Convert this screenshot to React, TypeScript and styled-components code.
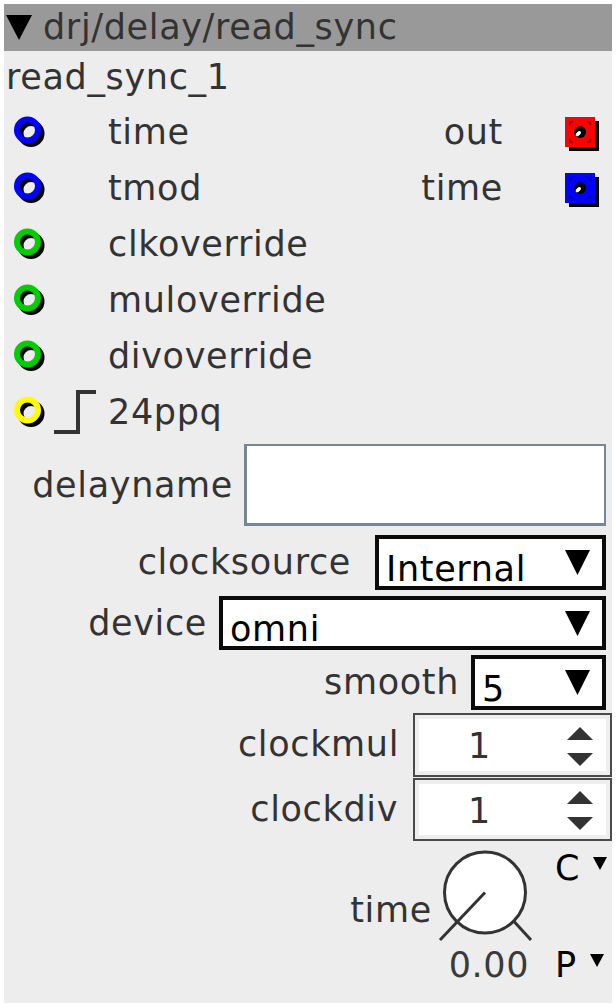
import React from "react";
import styled, { createGlobalStyle } from "styled-components";

const GlobalStyle = createGlobalStyle`
  html, body { margin: 0; padding: 0; background: #ffffff; }
  body { font-family: "DejaVu Sans", "Liberation Sans", sans-serif; }
`;

const Panel = styled.div`
  box-sizing: border-box;
  margin: 4px;
  width: 608px;
  height: 999px;
  background: #ededed;
  display: flex;
  flex-direction: column;
  font-size: 35px;
  line-height: 41px;
  letter-spacing: 0.65px;
  color: #333333;
  overflow: hidden;
`;

const TitleBar = styled.div`
  height: 47px;
  flex: none;
  background: #999999;
  display: flex;
  align-items: center;
  padding-left: 2px;
  white-space: nowrap;
`;

const TitleText = styled.span`
  color: #333333;
  margin-left: 11px;
`;

const InstanceName = styled.div`
  height: 53px;
  flex: none;
  display: flex;
  align-items: center;
  padding-left: 2px;
`;

const IOArea = styled.div`
  display: flex;
  justify-content: space-between;
  flex: none;
`;

const Column = styled.div`
  display: flex;
  flex-direction: column;
`;

const InletRow = styled.div`
  height: 56px;
  display: flex;
  align-items: center;
  padding-left: 6px;
`;

const StepSlot = styled.div`
  width: 58px;
  height: 56px;
  display: flex;
`;

const OutletRow = styled.div`
  height: 56px;
  display: flex;
  align-items: center;
  justify-content: flex-end;
  gap: 60px;
  padding-right: 9px;
`;

const Params = styled.div`
  display: flex;
  flex-direction: column;
`;

const ParamRow = styled.div<{ $h: number; $gap: number; $pr: number }>`
  height: ${(p) => p.$h}px;
  flex: none;
  display: flex;
  align-items: center;
  justify-content: flex-end;
  gap: ${(p) => p.$gap}px;
  padding-right: ${(p) => p.$pr}px;
`;

const Label = styled.span`
  color: #333333;
  white-space: nowrap;
`;

const TextField = styled.div`
  box-sizing: border-box;
  width: 362px;
  height: 82px;
  background: #ffffff;
  border: 3px solid #76879a;
  border-right-width: 2px;
  border-top-width: 2px;
`;

const Dropdown = styled.div<{ $w: number; $h: number }>`
  box-sizing: border-box;
  width: ${(p) => p.$w}px;
  height: ${(p) => p.$h}px;
  background: #ffffff;
  border: 4px solid #0a0a0a;
  display: flex;
  align-items: center;
  justify-content: space-between;
  padding-left: 7px;
  padding-right: 12px;
  color: #000000;
`;

const DropValue = styled.span`
  align-self: flex-end;
  line-height: 34px;
`;

const Spinner = styled.div<{ $h: number }>`
  box-sizing: border-box;
  width: 199px;
  height: ${(p) => p.$h}px;
  background: #ffffff;
  border: 2px solid #4a4a4a;
  box-shadow: inset 0 0 0 4px #eeeeee;
  display: flex;
  align-items: center;
`;

const SpinValue = styled.span`
  flex: 1;
  text-align: center;
  padding-top: 4px;
  padding-right: 6px;
  color: #333333;
`;

const SpinArrows = styled.div`
  width: 60px;
  display: flex;
  justify-content: center;
  margin-top: 4px;
`;

const KnobRow = styled.div`
  display: flex;
  justify-content: flex-end;
  align-items: flex-start;
  padding-top: 5px;
  padding-right: 5px;
`;

const KnobLabel = styled.span`
  color: #333333;
  margin-top: 44px;
  margin-right: 5px;
`;

const KnobColumn = styled.div`
  display: flex;
  flex-direction: column;
  align-items: center;
  width: 96px;
`;

const KnobValue = styled.span`
  margin-top: 3px;
  padding-left: 8px;
  color: #3a3a3a;
  white-space: nowrap;
`;

const ModColumn = styled.div`
  display: flex;
  flex-direction: column;
  gap: 56px;
  margin-top: 2px;
  margin-left: 22px;
`;

const ModItem = styled.div`
  display: flex;
  align-items: flex-start;
  gap: 13px;
  color: #000000;
`;

const SmallCaret = styled.svg`
  margin-top: 9px;
`;

const Ring = ({ color }: { color: string }) => (
  <svg width="40" height="40" viewBox="0 0 40 40">
    <circle cx="21" cy="21.5" r="10.5" fill="none" stroke="#000" strokeWidth="6" />
    <circle cx="17.5" cy="18" r="10.5" fill="none" stroke={color} strokeWidth="6" />
  </svg>
);

const Step = () => (
  <svg width="58" height="56" viewBox="0 0 58 56">
    <path d="M4 48 H28 V8 H46" fill="none" stroke="#333" strokeWidth="4" />
  </svg>
);

const Outlet = ({ color }: { color: string }) => (
  <svg width="40" height="40" viewBox="0 0 40 40">
    <rect x="6" y="9" width="30" height="30" fill="#000" />
    <rect x="2" y="5" width="30" height="30" fill={color} />
    <g stroke="#000" strokeOpacity="0.6" strokeWidth="1.2" fill="none">
      <path d="M7 13 V10 H10" />
      <path d="M24 10 H27 V13" />
      <path d="M27 27 V30 H24" />
      <path d="M10 30 H7 V27" />
    </g>
    <circle cx="17" cy="20" r="6" fill="#000" />
    <ellipse cx="15.3" cy="21.8" rx="3.2" ry="1.8" transform="rotate(-45 15.3 21.8)" fill="#fff" />
  </svg>
);

const Caret = ({ w, h }: { w: number; h: number }) => (
  <svg width={w} height={h} viewBox={`0 0 ${w} ${h}`}>
    <polygon points={`0,0 ${w},0 ${w / 2},${h}`} fill="#000" />
  </svg>
);

const UpDown = () => (
  <svg width="26" height="40" viewBox="0 0 26 40">
    <polygon points="0,13 13,0 26,13" fill="#333" />
    <polygon points="0,26 26,26 13,39" fill="#333" />
  </svg>
);

const Knob = () => (
  <svg width="96" height="96" viewBox="0 0 96 96">
    <circle cx="48" cy="46.5" r="40.5" fill="#fff" stroke="#333" strokeWidth="3" />
    <line x1="48" y1="46.5" x2="3" y2="94" stroke="#333" strokeWidth="3" />
    <line x1="76.6" y1="75.1" x2="94" y2="94" stroke="#333" strokeWidth="3" />
  </svg>
);

const inlets = [
  { name: "time", color: "#0000ff" },
  { name: "tmod", color: "#0000ff" },
  { name: "clkoverride", color: "#00cc00" },
  { name: "muloverride", color: "#00cc00" },
  { name: "divoverride", color: "#00cc00" },
  { name: "24ppq", color: "#ffff00", step: true },
];

const outlets = [
  { name: "out", color: "#ff0000" },
  { name: "time", color: "#0000ff" },
];

export default function App() {
  return (
    <>
      <GlobalStyle />
      <Panel>
        <TitleBar>
          <Caret w={26} h={25} />
          <TitleText>drj/delay/read_sync</TitleText>
        </TitleBar>
        <InstanceName>read_sync_1</InstanceName>
        <IOArea>
          <Column>
            {inlets.map((i) => (
              <InletRow key={i.name}>
                <Ring color={i.color} />
                <StepSlot>{i.step ? <Step /> : null}</StepSlot>
                <Label>{i.name}</Label>
              </InletRow>
            ))}
          </Column>
          <Column>
            {outlets.map((o) => (
              <OutletRow key={o.name}>
                <Label>{o.name}</Label>
                <Outlet color={o.color} />
              </OutletRow>
            ))}
          </Column>
        </IOArea>
        <Params>
          <ParamRow $h={90} $gap={11} $pr={6}>
            <Label>delayname</Label>
            <TextField />
          </ParamRow>
          <ParamRow $h={64} $gap={24} $pr={6}>
            <Label>clocksource</Label>
            <Dropdown $w={231} $h={55}>
              <DropValue>Internal</DropValue>
              <Caret w={25} h={25} />
            </Dropdown>
          </ParamRow>
          <ParamRow $h={58} $gap={12} $pr={6}>
            <Label>device</Label>
            <Dropdown $w={387} $h={54}>
              <DropValue>omni</DropValue>
              <Caret w={25} h={25} />
            </Dropdown>
          </ParamRow>
          <ParamRow $h={60} $gap={12} $pr={6}>
            <Label>smooth</Label>
            <Dropdown $w={135} $h={55}>
              <DropValue>5</DropValue>
              <Caret w={25} h={25} />
            </Dropdown>
          </ParamRow>
          <ParamRow $h={65} $gap={14} $pr={0}>
            <Label>clockmul</Label>
            <Spinner $h={64}>
              <SpinValue>1</SpinValue>
              <SpinArrows>
                <UpDown />
              </SpinArrows>
            </Spinner>
          </ParamRow>
          <ParamRow $h={64} $gap={15} $pr={0}>
            <Label>clockdiv</Label>
            <Spinner $h={63}>
              <SpinValue>1</SpinValue>
              <SpinArrows>
                <UpDown />
              </SpinArrows>
            </Spinner>
          </ParamRow>
          <KnobRow>
            <KnobLabel>time</KnobLabel>
            <KnobColumn>
              <Knob />
              <KnobValue>0.00</KnobValue>
            </KnobColumn>
            <ModColumn>
              <ModItem>
                <span>C</span>
                <SmallCaret width="14" height="13" viewBox="0 0 14 13">
                  <polygon points="0,0 14,0 7,13" fill="#000" />
                </SmallCaret>
              </ModItem>
              <ModItem>
                <span>P</span>
                <SmallCaret width="14" height="13" viewBox="0 0 14 13">
                  <polygon points="0,0 14,0 7,13" fill="#000" />
                </SmallCaret>
              </ModItem>
            </ModColumn>
          </KnobRow>
        </Params>
      </Panel>
    </>
  );
}
